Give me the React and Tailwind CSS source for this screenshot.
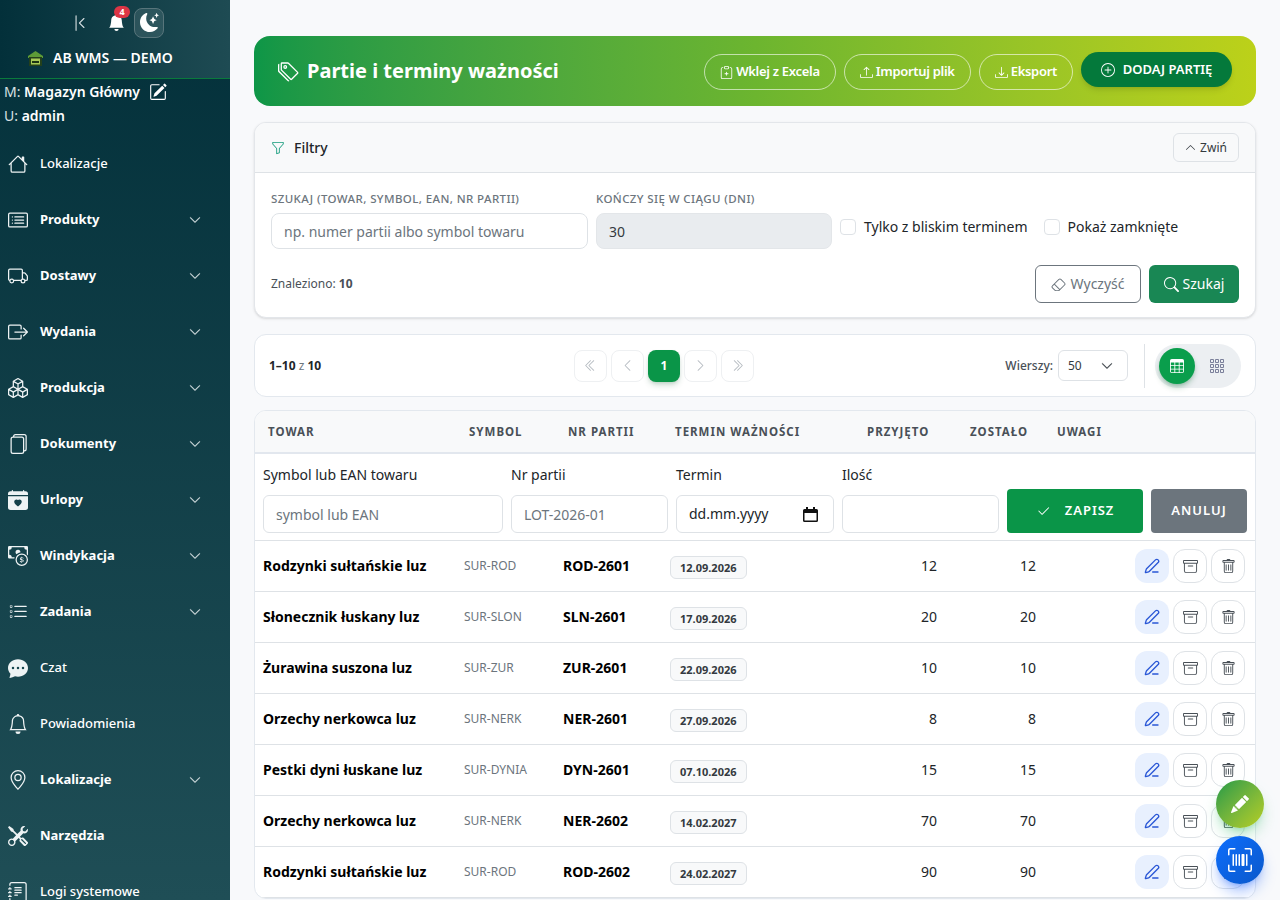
import {
  BsArchive, BsBell, BsBellFill, BsBoxArrowRight, BsBoxes, BsCalendarHeartFill, BsCardList, BsCashCoin,
  BsChatDotsFill, BsCheck2, BsChevronBarLeft, BsChevronDoubleLeft, BsChevronDoubleRight, BsChevronDown,
  BsChevronLeft, BsChevronRight, BsChevronUp, BsClipboardPlus, BsDownload, BsEraser, BsFiles, BsFunnel,
  BsGeoAlt, BsGrid3X3Gap, BsHouse, BsJournalText, BsListTask, BsMoonStarsFill, BsPencilFill, BsPencilSquare,
  BsPlusCircle, BsSearch, BsTable, BsTags, BsTools, BsTrash, BsTruck, BsUpcScan, BsUpload,
} from 'react-icons/bs';
import { PenLine } from 'lucide-react';

const menu = [
  { label: 'Lokalizacje', icon: BsHouse },
  { label: 'Produkty', icon: BsCardList, sub: true },
  { label: 'Dostawy', icon: BsTruck, sub: true },
  { label: 'Wydania', icon: BsBoxArrowRight, sub: true },
  { label: 'Produkcja', icon: BsBoxes, sub: true },
  { label: 'Dokumenty', icon: BsFiles, sub: true },
  { label: 'Urlopy', icon: BsCalendarHeartFill, sub: true },
  { label: 'Windykacja', icon: BsCashCoin, sub: true },
  { label: 'Zadania', icon: BsListTask, sub: true },
  { label: 'Czat', icon: BsChatDotsFill },
  { label: 'Powiadomienia', icon: BsBell },
  { label: 'Lokalizacje', icon: BsGeoAlt, sub: true },
  { label: 'Narzędzia', icon: BsTools, bold: true },
  { label: 'Logi systemowe', icon: BsJournalText },
];

const rows = [
  ['Rodzynki sułtańskie luz', 'SUR-ROD', 'ROD-2601', '12.09.2026', 12, 12],
  ['Słonecznik łuskany luz', 'SUR-SLON', 'SLN-2601', '17.09.2026', 20, 20],
  ['Żurawina suszona luz', 'SUR-ZUR', 'ZUR-2601', '22.09.2026', 10, 10],
  ['Orzechy nerkowca luz', 'SUR-NERK', 'NER-2601', '27.09.2026', 8, 8],
  ['Pestki dyni łuskane luz', 'SUR-DYNIA', 'DYN-2601', '07.10.2026', 15, 15],
  ['Orzechy nerkowca luz', 'SUR-NERK', 'NER-2602', '14.02.2027', 70, 70],
  ['Rodzynki sułtańskie luz', 'SUR-ROD', 'ROD-2602', '24.02.2027', 90, 90],
];

const columns = 'grid grid-cols-[201px_99px_107px_192px_103px_87px_1fr]';

function Sidebar() {
  return (
    <aside className="w-[230px] shrink-0 h-full overflow-hidden text-white bg-gradient-to-b from-[#03303a] to-[#1f4e56]">
      <div className="h-[79px] border-b border-[#0a7a3c] bg-gradient-to-r from-[#03303a] to-[#1e4b53]">
        <div className="flex items-center h-[44px] pt-[1px]">
          <BsChevronBarLeft className="ml-[71px] text-[18px] text-[#d5dee0]" />
          <div className="relative ml-[19px]">
            <BsBellFill className="text-[17px]" />
            <span className="absolute -top-[8px] left-[6px] h-[12px] min-w-[16px] rounded-full bg-[#dc3545] text-[9px] leading-[12px] font-bold text-center">4</span>
          </div>
          <div className="ml-[9px] w-[30px] h-[30px] rounded-lg border border-[#58757b] bg-white/10 flex items-center justify-center">
            <BsMoonStarsFill className="text-[19px]" />
          </div>
        </div>
        <div className="flex items-center pl-[27px] gap-[9px] text-sm font-semibold leading-[28px]">
          <svg width="17" height="17" viewBox="0 0 17 17">
            <path d="M8.5 1 16 6v2H1V6z" fill="#5d9b37" />
            <rect x="2" y="7" width="13" height="9" fill="#24401b" />
            <rect x="4" y="8.5" width="9" height="6" fill="#a7c957" />
            <rect x="5" y="11" width="7" height="2" fill="#1c3314" />
          </svg>
          <span>AB WMS — DEMO</span>
        </div>
      </div>
      <div className="pl-[4px] pt-[1px] text-sm leading-[24px]">
        <div className="flex items-center">
          <span className="text-[#d8e1e3]">M:&nbsp;</span>
          <b className="font-semibold">Magazyn Główny</b>
          <BsPencilSquare className="ml-[9px] text-[18px]" />
        </div>
        <div><span className="text-[#d8e1e3]">U: </span><b className="font-semibold">admin</b></div>
      </div>
      <nav className="pt-[8px]">
        {menu.map((item, i) => {
          const Icon = item.icon;
          return (
            <div key={i} className="flex items-center h-[56px] pl-[8px] pr-[29px] text-[13px]">
              <Icon className="w-[20px] h-[20px] text-[#eef3f4]" />
              <span className={'ml-[12px] flex-1 ' + (item.sub || item.bold ? 'font-bold' : 'font-medium')}>{item.label}</span>
              {item.sub && <BsChevronDown className="text-[12px] text-[#dce5e6] stroke-[0.5]" />}
            </div>
          );
        })}
      </nav>
    </aside>
  );
}

function HeroButton({ icon: Icon, children }) {
  return (
    <button className="h-[36px] px-[15px] rounded-full border border-white/60 text-white text-[13px] font-semibold tracking-[-0.3px] flex items-center gap-[3px]">
      <Icon className="text-[13px]" />
      {children}
    </button>
  );
}

function Hero() {
  return (
    <div className="h-[70px] rounded-2xl bg-gradient-to-r from-[#0d9647] via-[#6cb52f] to-[#bcd119] flex items-center pl-[24px] pr-[24px] text-white">
      <BsTags className="text-[21px]" />
      <h1 className="ml-[8px] text-[20px] font-bold flex-1">Partie i terminy ważności</h1>
      <div className="flex items-start gap-[8px]">
        <div className="flex gap-[8px] pt-[2px]">
          <HeroButton icon={BsClipboardPlus}>Wklej z Excela</HeroButton>
          <HeroButton icon={BsUpload}>Importuj plik</HeroButton>
          <HeroButton icon={BsDownload}>Eksport</HeroButton>
        </div>
        <button className="h-[35px] w-[151px] -mt-[0px] rounded-full bg-[#04793b] shadow-md text-[13px] font-semibold flex items-center justify-center gap-[8px]">
          <BsPlusCircle className="text-[14px]" />
          DODAJ PARTIĘ
        </button>
      </div>
    </div>
  );
}

function Filters() {
  return (
    <div className="mt-[16px] rounded-xl bg-white border border-[#e3e6ea] shadow-sm overflow-hidden">
      <div className="h-[50px] bg-[#f8f9fa] border-b border-[#dee2e6] flex items-center justify-between pl-[16px] pr-[16px]">
        <div className="flex items-center gap-[9px] text-sm font-medium text-[#212529]">
          <BsFunnel className="text-[14px] text-[#129a7a]" />
          Filtry
        </div>
        <button className="h-[29px] w-[66px] rounded-md border border-[#dee2e6] text-xs text-[#343a40] flex items-center justify-center gap-[4px]">
          <BsChevronUp className="text-[11px]" />
          Zwiń
        </button>
      </div>
      <div className="px-[16px] pt-[19px] pb-[14px]">
        <div className="flex items-end gap-[8px]">
          <label className="block w-[317px]">
            <span className="block text-[11.5px] leading-[14px] font-medium tracking-[0.4px] text-[#6c757d] mb-[7px]">SZUKAJ (TOWAR, SYMBOL, EAN, NR PARTII)</span>
            <input placeholder="np. numer partii albo symbol towaru" className="w-full h-[36px] rounded-lg border border-[#dee2e6] px-[12px] text-sm outline-none placeholder:text-[#6c757d]" />
          </label>
          <label className="block w-[236px]">
            <span className="block text-[11.5px] leading-[14px] font-medium tracking-[0.4px] text-[#6c757d] mb-[7px]">KOŃCZY SIĘ W CIĄGU (DNI)</span>
            <input readOnly value="30" className="w-full h-[36px] rounded-lg border border-[#e3e6e9] bg-[#e9ecef] px-[12px] text-sm text-[#343a40] outline-none" />
          </label>
          <div className="h-[36px] flex items-center text-sm text-[#212529] pb-[8px]">
            <input type="checkbox" className="appearance-none w-[16px] h-[16px] rounded border border-[#dee2e6] bg-white" />
            <span className="ml-[8px]">Tylko z bliskim terminem</span>
            <input type="checkbox" className="ml-[16px] appearance-none w-[16px] h-[16px] rounded border border-[#dee2e6] bg-white" />
            <span className="ml-[8px]">Pokaż zamknięte</span>
          </div>
        </div>
        <div className="mt-[16px] flex items-center justify-between">
          <div className="text-xs text-[#495057]">Znaleziono: <b className="font-bold">10</b></div>
          <div className="flex gap-[8px]">
            <button className="w-[106px] h-[38px] rounded-md border border-[#6c757d] text-sm text-[#6c757d] flex items-center justify-center gap-[4px]">
              <BsEraser className="text-[15px]" />
              Wyczyść
            </button>
            <button className="w-[90px] h-[38px] rounded-md bg-[#198754] text-sm text-white flex items-center justify-center gap-[4px]">
              <BsSearch className="text-[15px]" />
              Szukaj
            </button>
          </div>
        </div>
      </div>
    </div>
  );
}

function PageButton({ icon: Icon }) {
  return (
    <button className="w-[33px] h-[32px] rounded-lg border border-[#eef0f2] bg-white flex items-center justify-center text-[#b4bac0]">
      <Icon className="text-[13px]" />
    </button>
  );
}

function Pager() {
  return (
    <div className="mt-[16px] h-[63px] rounded-xl bg-white border border-[#e3e8ee] flex items-center pl-[14px] pr-[14px]">
      <div className="w-[305px] text-xs text-[#212529]"><b className="font-bold">1–10</b> <span className="text-[#6c757d]">z</span> <b className="font-bold">10</b></div>
      <div className="flex items-center gap-[4px]">
        <PageButton icon={BsChevronDoubleLeft} />
        <PageButton icon={BsChevronLeft} />
        <button className="w-[32px] h-[32px] rounded-lg bg-[#0a9548] text-white text-xs font-bold shadow-md shadow-green-900/20">1</button>
        <PageButton icon={BsChevronRight} />
        <PageButton icon={BsChevronDoubleRight} />
      </div>
      <div className="ml-auto flex items-center">
        <span className="text-xs font-medium text-[#495057]">Wierszy:</span>
        <div className="ml-[5px] w-[70px] h-[31px] rounded-md border border-[#dee2e6] flex items-center justify-between pl-[9px] pr-[14px] text-xs text-[#343a40]">
          50
          <BsChevronDown className="text-[12px] stroke-[0.5]" />
        </div>
        <div className="ml-[16px] w-[1px] h-[44px] bg-[#dee2e6]" />
        <div className="ml-[10px] w-[86px] h-[44px] rounded-full bg-[#eceff2] flex items-center pl-[4px]">
          <div className="w-[36px] h-[36px] rounded-full bg-[#0a9e4c] shadow-md shadow-green-800/30 flex items-center justify-center">
            <BsTable className="text-[14px] text-white" />
          </div>
          <BsGrid3X3Gap className="ml-[14px] text-[16px] text-[#7a7f9a]" />
        </div>
      </div>
    </div>
  );
}

function Field({ label, children }) {
  return (
    <div>
      <div className="text-sm leading-[20px] text-[#212529] mb-[10px]">{label}</div>
      {children}
    </div>
  );
}

const formInput = 'w-full h-[38px] rounded-md border border-[#dee2e6] px-[12px] text-sm outline-none placeholder:text-[#6c757d]';

function AddForm() {
  return (
    <div className="h-[87px] border-b border-[#dee2e6] px-[8px] pt-[11px] grid grid-cols-[240px_157px_158px_157px_136px_96px] gap-x-[8px] items-end pb-[8px]">
      <Field label="Symbol lub EAN towaru"><input placeholder="symbol lub EAN" className={formInput} /></Field>
      <Field label="Nr partii"><input placeholder="LOT-2026-01" className={formInput} /></Field>
      <Field label="Termin">
        <div className={formInput + ' flex items-center justify-between text-[#212529]'}>
          dd.mm.yyyy
          <svg width="15" height="15" viewBox="0 0 15 15" className="mr-[3px]">
            <path d="M3 0h2v2h5V0h2v2h1.5A1.5 1.5 0 0 1 15 3.5v10a1.5 1.5 0 0 1-1.5 1.5h-12A1.5 1.5 0 0 1 0 13.5v-10A1.5 1.5 0 0 1 1.5 2H3zM1.5 6v7.5h12V6z" fill="#111" />
          </svg>
        </div>
      </Field>
      <Field label="Ilość"><input className={formInput} /></Field>
      <button className="h-[44px] rounded bg-[#0a9548] text-white text-[13px] font-semibold tracking-[1px] flex items-center justify-center gap-[14px]">
        <BsCheck2 className="text-[15px]" />
        ZAPISZ
      </button>
      <button className="h-[44px] rounded bg-[#6c757d] text-white text-[13px] font-semibold tracking-[1px]">ANULUJ</button>
    </div>
  );
}

function Row({ row }) {
  return (
    <div className={columns + ' h-[51px] items-center border-b border-[#dee2e6] pl-[8px] text-[#212529]'}>
      <div className="text-sm font-bold text-black whitespace-nowrap">{row[0]}</div>
      <div className="text-xs text-[#6c757d]">{row[1]}</div>
      <div className="text-sm font-bold text-black">{row[2]}</div>
      <div>
        <span className="inline-block h-[23px] px-[9px] rounded-md border border-[#dee2e6] bg-[#f8f9fa] text-[11px] leading-[21px] font-bold text-[#343a40]">{row[3]}</span>
      </div>
      <div className="text-sm text-right pr-[28px]">{row[4]}</div>
      <div className="text-sm text-right pr-[16px]">{row[5]}</div>
      <div className="flex justify-end gap-[4px] pr-[10px]">
        <button className="w-[34px] h-[34px] rounded-xl bg-[#e8f0fe] text-[#2a57d6] flex items-center justify-center"><PenLine size={16} /></button>
        <button className="w-[34px] h-[34px] rounded-xl border border-[#dee2e6] text-[#495057] flex items-center justify-center"><BsArchive className="text-[15px]" /></button>
        <button className="w-[34px] h-[34px] rounded-xl border border-[#dee2e6] text-[#495057] flex items-center justify-center"><BsTrash className="text-[15px]" /></button>
      </div>
    </div>
  );
}

function BatchTable() {
  const heads = ['TOWAR', 'SYMBOL', 'NR PARTII', 'TERMIN WAŻNOŚCI', 'PRZYJĘTO', 'ZOSTAŁO', 'UWAGI'];
  return (
    <div className="mt-[13px] rounded-xl bg-white border border-[#e3e8ee] overflow-hidden">
      <div className={columns + ' h-[43px] items-center bg-[#f8f9fa] border-b-2 border-[#e2e7ee] pl-[13px] text-[11.5px] font-bold tracking-[1px] text-[#495057]'}>
        {heads.map((h, i) => (
          <div key={h} className={i === 0 ? 'ml-[0px]' : i === 4 ? 'ml-[0px]' : ''}>{h}</div>
        ))}
      </div>
      <AddForm />
      {rows.map((row, i) => <Row key={i} row={row} />)}
    </div>
  );
}

export default function App() {
  return (
    <div className="relative flex h-[900px] w-[1280px] overflow-hidden bg-[#f8f9fb] font-['Noto_Sans',sans-serif]">
      <Sidebar />
      <main className="flex-1 min-w-0 px-[24px] pt-[36px]">
        <Hero />
        <Filters />
        <Pager />
        <BatchTable />
      </main>
      <button className="absolute left-[1216px] top-[780px] w-[48px] h-[48px] rounded-full bg-gradient-to-br from-[#0f9a46] to-[#b5cf1e] shadow-lg shadow-green-600/30 text-white flex items-center justify-center">
        <BsPencilFill className="text-[18px]" />
      </button>
      <button className="absolute left-[1216px] top-[836px] w-[48px] h-[48px] rounded-full bg-gradient-to-br from-[#0d6efd] to-[#0a58ca] shadow-lg shadow-blue-600/40 text-white flex items-center justify-center">
        <BsUpcScan className="text-[24px]" />
      </button>
    </div>
  );
}
